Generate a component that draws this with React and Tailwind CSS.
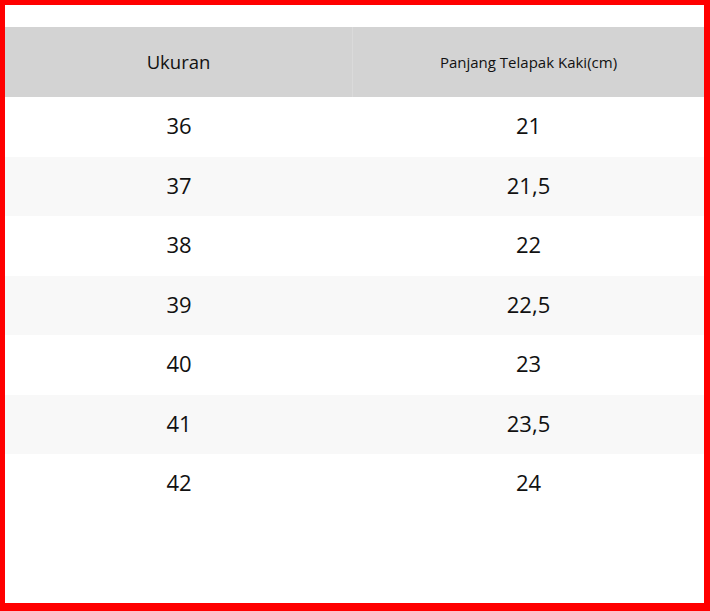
import React from "react";

const rows = [
  ["36", "21"],
  ["37", "21,5"],
  ["38", "22"],
  ["39", "22,5"],
  ["40", "23"],
  ["41", "23,5"],
  ["42", "24"],
];

const App = () => {
  return (
    <div className="w-[710px] h-[611px] bg-white border-solid border-[#ff0000] border-t-[5px] border-l-[5px] border-r-[6px] border-b-[8px] font-['Open_Sans',sans-serif] text-[#111]">
      <div className="pt-[22px]">
        <div className="grid grid-cols-[348px_1fr] h-[70px] bg-[#d3d3d3]">
          <div className="flex items-center justify-center text-[18.5px] border-r border-[#dadada]">Ukuran</div>
          <div className="flex items-center justify-center text-[15px]">Panjang Telapak Kaki(cm)</div>
        </div>
        {rows.map(([size, len], i) => (
          <div
            key={size}
            className={`grid grid-cols-[348px_1fr] h-[59.5px] text-[22px] pb-[2px] ${i % 2 === 1 ? "bg-[#f8f8f8]" : "bg-white"}`}
          >
            <div className="flex items-center justify-center">{size}</div>
            <div className="flex items-center justify-center">{len}</div>
          </div>
        ))}
      </div>
    </div>
  );
};

export default App;
